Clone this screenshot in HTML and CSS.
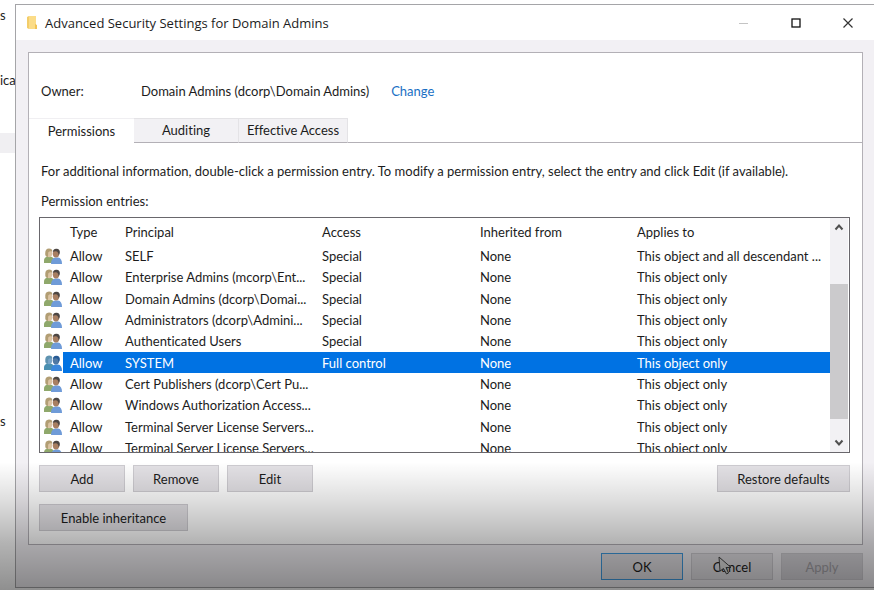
FILE: index.html
```html
<!DOCTYPE html>
<html lang="en">
<head>
<meta charset="utf-8">
<title>Advanced Security Settings for Domain Admins</title>
<link rel="stylesheet" href="styles.css">
</head>
<body>
<svg class="sprite" aria-hidden="true">
  <symbol id="users" viewBox="0 0 18 16">
    <path class="u-green" d="M0 15V12.500Q0 9 4 8.500H6Q10 9 10 12V15Z"/>
    <ellipse class="u-skin1" cx="5.200" cy="5.200" rx="3" ry="4"/>
    <path class="u-hair1" d="M1.300 7Q.6 .6 5 .6Q8.500 .6 8.300 3.500Q5.500 2.600 4.200 4.500L4 9Q1.500 9 1.300 7Z"/>
    <path class="u-blue" d="M7 16Q7 10.500 11 9.500H14Q18 10 18 16Z"/>
    <ellipse class="u-skin2" cx="12" cy="5.500" rx="3.200" ry="4"/>
    <path class="u-hair2" d="M8.800 3.800Q9.500 .5 12.500 .8Q16.300 1 15.800 5L14.800 7.500Q14.500 4.500 13 3.500Q11 3 8.800 3.800Z"/>
  </symbol>
</svg>
<div class="desktop">
  <aside class="behind">
    <span class="bit bit-top">s</span>
    <span class="bit bit-mid">ica</span>
    <span class="behind-row"></span>
    <span class="bit bit-low">s</span>
  </aside>
  <main class="dialog">
    <header class="titlebar">
      <svg class="folder" viewBox="0 0 12 15" aria-hidden="true"><path fill="#f3cd69" d="M0 2L2 1V14L0 13Z"/><path fill="#fbdc88" d="M2 1H9V10L10 11V14H2Z"/><path fill="#f1c255" d="M8 9L10 10V14H8Z"/></svg>
      <h1>Advanced Security Settings for Domain Admins</h1>
      <div class="window-buttons">
        <button aria-label="Minimize" disabled><svg viewBox="0 0 12 12"><path d="M1 6.500H10" stroke="#c4c4c4"/></svg></button>
        <button aria-label="Maximize"><svg viewBox="0 0 12 12"><rect x="2" y="2" width="8" height="8" stroke="#111" stroke-width="1.300"/></svg></button>
        <button aria-label="Close"><svg viewBox="0 0 12 12"><path d="M1.500 1.500L10.500 10.500M10.500 1.500L1.500 10.500" stroke="#333" stroke-width="1.200"/></svg></button>
      </div>
    </header>
    <section class="panel">
      <div class="owner">
        <span class="owner-label">Owner:</span>
        <span class="owner-name">Domain Admins (dcorp\Domain Admins)</span>
        <a href="#change">Change</a>
      </div>
      <div class="tabs" role="tablist">
        <button class="tab active" role="tab" aria-selected="true">Permissions</button>
        <button class="tab" role="tab" aria-selected="false">Auditing</button>
        <button class="tab" role="tab" aria-selected="false">Effective Access</button>
        <span class="tabs-rest"></span>
      </div>
      <div class="page">
        <p class="info">For additional information, double-click a permission entry. To modify a permission entry, select the entry and click Edit (if available).</p>
        <p class="info" id="entries-label">Permission entries:</p>
        <div class="list">
          <div class="rows">
            <table aria-labelledby="entries-label">
              <colgroup><col class="c-icon"><col class="c-type"><col class="c-principal"><col class="c-access"><col class="c-inherited"><col></colgroup>
              <thead><tr><th></th><th>Type</th><th>Principal</th><th>Access</th><th>Inherited from</th><th>Applies to</th></tr></thead>
              <tbody>
                <tr><td><svg class="users"><use href="#users"/></svg></td><td>Allow</td><td>SELF</td><td>Special</td><td>None</td><td>This object and all descendant ...</td></tr>
                <tr><td><svg class="users"><use href="#users"/></svg></td><td>Allow</td><td>Enterprise Admins (mcorp\Ent...</td><td>Special</td><td>None</td><td>This object only</td></tr>
                <tr><td><svg class="users"><use href="#users"/></svg></td><td>Allow</td><td>Domain Admins (dcorp\Domai...</td><td>Special</td><td>None</td><td>This object only</td></tr>
                <tr><td><svg class="users"><use href="#users"/></svg></td><td>Allow</td><td>Administrators (dcorp\Admini...</td><td>Special</td><td>None</td><td>This object only</td></tr>
                <tr><td><svg class="users"><use href="#users"/></svg></td><td>Allow</td><td>Authenticated Users</td><td>Special</td><td>None</td><td>This object only</td></tr>
                <tr class="selected"><td><svg class="users"><use href="#users"/></svg></td><td>Allow</td><td>SYSTEM</td><td>Full control</td><td>None</td><td>This object only</td></tr>
                <tr><td><svg class="users"><use href="#users"/></svg></td><td>Allow</td><td>Cert Publishers (dcorp\Cert Pu...</td><td></td><td>None</td><td>This object only</td></tr>
                <tr><td><svg class="users"><use href="#users"/></svg></td><td>Allow</td><td>Windows Authorization Access...</td><td></td><td>None</td><td>This object only</td></tr>
                <tr><td><svg class="users"><use href="#users"/></svg></td><td>Allow</td><td>Terminal Server License Servers...</td><td></td><td>None</td><td>This object only</td></tr>
                <tr><td><svg class="users"><use href="#users"/></svg></td><td>Allow</td><td>Terminal Server License Servers...</td><td></td><td>None</td><td>This object only</td></tr>
              </tbody>
            </table>
          </div>
          <div class="scrollbar">
            <button aria-label="Scroll up"><svg viewBox="0 0 10 8"><path d="M1.500 6.500L5 2.500L8.500 6.500"/></svg></button>
            <div class="track"><div class="thumb"></div></div>
            <button aria-label="Scroll down"><svg viewBox="0 0 10 8"><path d="M1.500 1.500L5 5.500L8.500 1.500"/></svg></button>
          </div>
        </div>
        <div class="actions">
          <button class="btn">Add</button>
          <button class="btn">Remove</button>
          <button class="btn">Edit</button>
          <button class="btn wide end">Restore defaults</button>
        </div>
        <div class="actions">
          <button class="btn wider">Enable inheritance</button>
        </div>
      </div>
    </section>
    <footer class="footer">
      <button class="btn default">OK</button>
      <button class="btn cancel">Cancel
        <svg class="cursor" viewBox="0 0 15 20" aria-hidden="true"><path d="M1 1L2 15L5.500 12.500L8.500 18L10.500 17L8 11.500H13Z"/></svg>
      </button>
      <button class="btn" disabled>Apply</button>
    </footer>
  </main>
</div>
</body>
</html>
```
FILE: styles.css
```css
* { box-sizing: border-box; }

body {
  margin: 0;
  background: #fff;
  color: #1c1c1c;
  font: 13px/20px Lato, "Open Sans", sans-serif;
  font-variant-ligatures: none;
}

button { font: inherit; color: inherit; border: 0; padding: 0; background: none; }
svg { display: block; }
.sprite { position: absolute; width: 0; height: 0; }

.desktop {
  position: relative;
  display: flex;
  min-height: 100vh;
  padding: 4px 0 2px;
  overflow: hidden;
}

/* Player shade that darkens the lower part of the frame */
.desktop::after {
  content: "";
  position: absolute;
  inset: auto 0 0;
  height: 128px;
  background: linear-gradient(rgba(0,0,0,0), rgba(0,0,0,.13) 30%, rgba(0,0,0,.3) 64%, rgba(0,0,0,.44));
  pointer-events: none;
}

.behind { width: 15px; flex: none; display: flex; flex-direction: column; }
.bit { height: 20px; }
.bit-top { margin-top: 1px; }
.bit-mid { margin-top: 45px; }
.behind-row { height: 20px; margin-top: 43px; background: #f0eff2; }
.bit-low { margin-top: 258px; }

.dialog {
  flex: 1;
  min-width: 0;
  display: flex;
  flex-direction: column;
  background: #f2f0f4;
  border: 1px solid #a5a5a8;
  border-right: 0;
}

.titlebar { display: flex; align-items: center; height: 35px; padding-left: 11px; background: #fff; }
.folder { width: 12px; height: 15px; margin-right: 6px; }
h1 { margin: 0; font: 13px/20px "Open Sans", "Noto Sans", sans-serif; }
.window-buttons { display: flex; margin-left: auto; }
.window-buttons button { width: 52px; height: 34px; display: grid; place-items: center; }
.window-buttons svg { width: 12px; height: 12px; fill: none; }

.panel {
  flex: 1;
  display: flex;
  flex-direction: column;
  margin: 12px 11px 0 12px;
  border: 1px solid #b3b0b6;
  background: #fff;
}

.owner { display: flex; padding: 28px 12px 0; height: 65px; }
.owner-label { width: 100px; }
.owner a { margin-left: 22px; color: #1a6fc4; text-decoration: none; }

.tabs { display: flex; height: 25px; }
.tab { width: 105px; padding-bottom: 2px; background: #f2f1f4; border: solid #e4e3e6; border-width: 1px 1px 0 0; border-bottom: 1px solid #b3b0b6; }
.tab:nth-child(3) { width: 109px; }
.tab.active { padding-bottom: 0; background: #fff; border-top-color: #f0eff2; border-right: 0; border-bottom-color: #fff; }
.tabs-rest { flex: 1; border-bottom: 1px solid #b3b0b6; }

.page { flex: 1; padding: 18px 12px 12px 10px; }
.info { margin: 0 0 10px 2px; }
#entries-label { margin-bottom: 6px; }

.list { display: flex; height: 236px; border: 1px solid #69676c; }
.rows { flex: 1; min-width: 0; overflow: hidden; }
table { width: 100%; table-layout: fixed; border-collapse: collapse; }
.c-icon { width: 23px; }
.c-type { width: 55px; }
.c-principal { width: 197px; }
.c-access { width: 158px; }
.c-inherited { width: 157px; }
th, td { padding: 0 0 0 7px; font-weight: 400; text-align: left; white-space: nowrap; }
thead tr { height: 27px; }
tbody tr { height: 21px; }
tbody tr:nth-child(3n+2) { height: 22px; }
td:first-child { padding-left: 4px; }
.selected td:not(:first-child) { background: #0072e3; color: #fff; }

.users {
  --green: #8fa86b;
  --blue: #6f9bd8;
  --skin1: #dcc4a4;
  --skin2: #a87f62;
  --hair1: #b29e74;
  --hair2: #4c4643;
  width: 18px;
  height: 16px;
}
.selected .users {
  --green: #4a8fb0;
  --blue: #3a87dc;
  --skin1: #7aa5c8;
  --skin2: #4f78a4;
  --hair1: #5f93b0;
  --hair2: #265a94;
}
.u-green { fill: var(--green); }
.u-blue { fill: var(--blue); }
.u-skin1 { fill: var(--skin1); }
.u-skin2 { fill: var(--skin2); }
.u-hair1 { fill: var(--hair1); }
.u-hair2 { fill: var(--hair2); }

.scrollbar { width: 18px; margin-right: 1px; display: flex; flex-direction: column; background: #f2f1f4; }
.scrollbar button { height: 18px; display: grid; place-items: center; }
.scrollbar svg { width: 10px; height: 8px; fill: none; stroke: #505050; stroke-width: 2; }
.track { flex: 1; display: flex; align-items: end; padding-bottom: 15px; }
.thumb { width: 100%; height: 74%; background: #cbcacc; }

.actions { display: flex; gap: 8px; margin-top: 12px; }
.btn { width: 86px; height: 27px; background: #e3e1e5; border: 1px solid #cdcbd0; }
.btn.wide { width: 133px; }
.btn.wider { width: 149px; }
.btn.end { margin-left: auto; }

.footer { display: flex; justify-content: flex-end; gap: 8px; padding: 8px 11px 7px; }
.footer .btn { width: 82px; }
.btn.default { border-color: #3f9be0; }
.btn:disabled { color: #a3a1a6; background: #d6d4d9; }
.cancel { position: relative; }
.cursor { position: absolute; left: 26px; top: 2px; width: 15px; height: 20px; fill: #dedede; stroke: #444; }
```
